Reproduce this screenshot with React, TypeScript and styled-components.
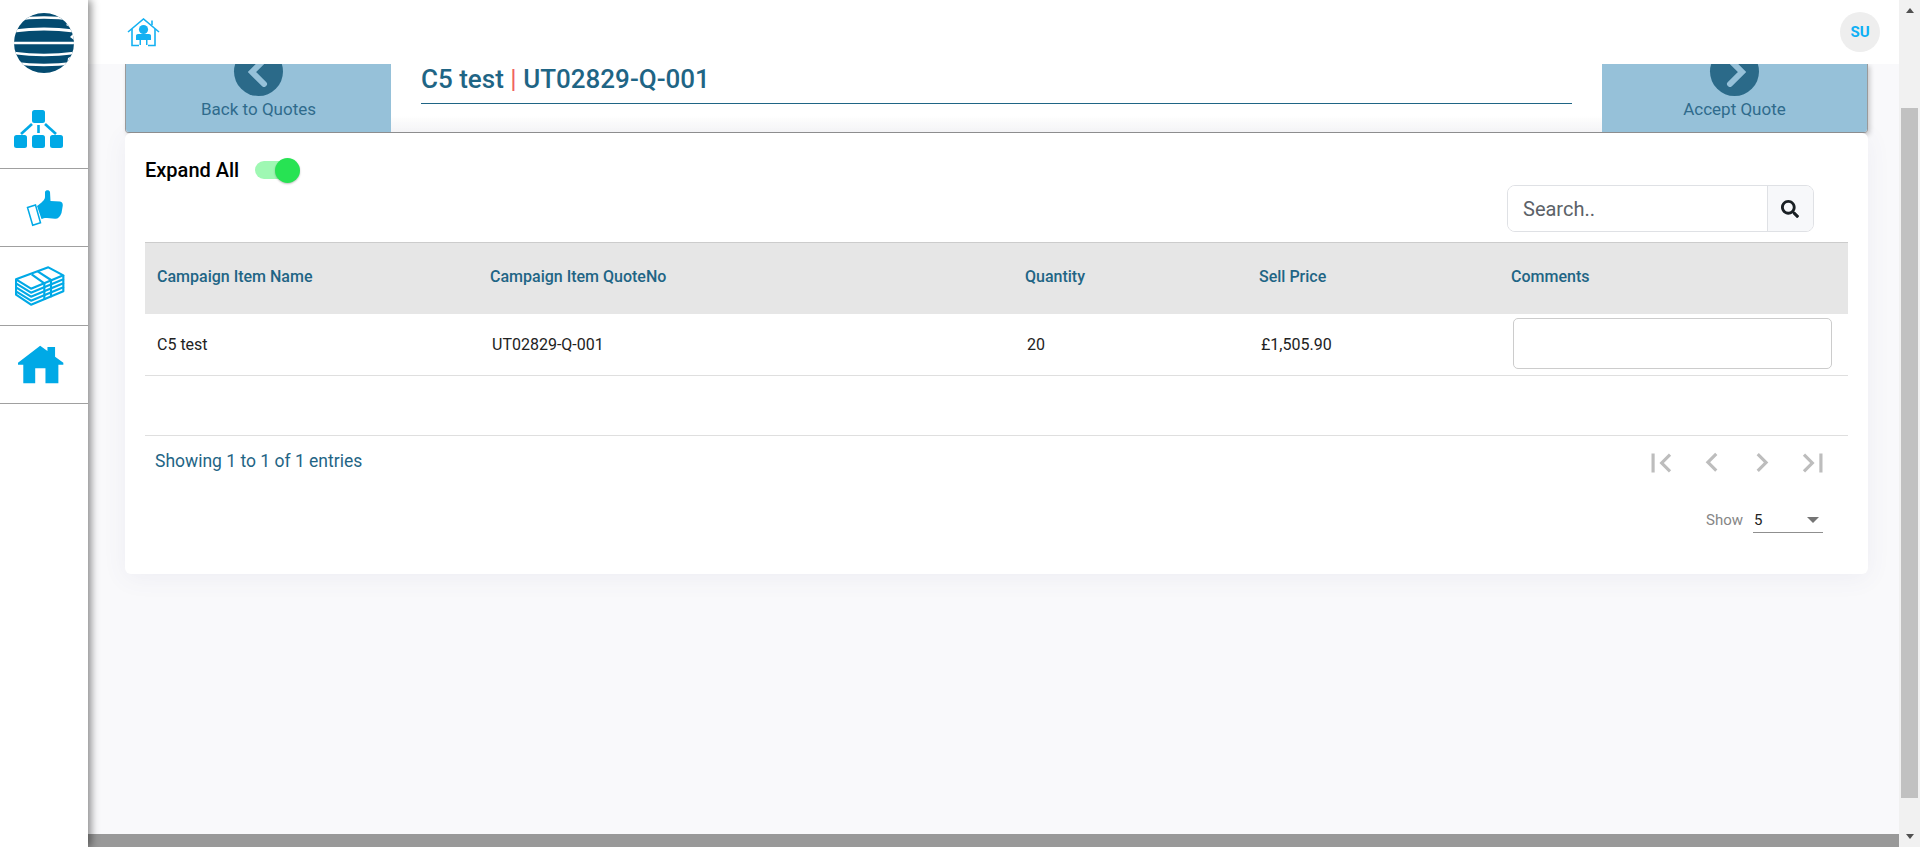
import React from 'react';
import styled, { createGlobalStyle } from 'styled-components';
import { FaSearch } from 'react-icons/fa';

const GlobalStyle = createGlobalStyle`
  html, body {
    margin: 0;
    height: 100%;
    overflow: hidden;
    font-family: Roboto, 'Liberation Sans', sans-serif;
    background: #f9f9fb;
  }
`;

const Page = styled.div`
  display: flex;
  width: 1920px;
  height: 847px;
  overflow: hidden;
`;

const Sidebar = styled.nav`
  width: 88px;
  flex-shrink: 0;
  background: #fff;
  box-shadow: 3px 0 8px rgba(0, 0, 0, 0.45);
  z-index: 3;
  display: flex;
  flex-direction: column;
`;

const SideItem = styled.div<{ $height: number; $plain?: boolean; $left?: number; $down?: number }>`
  height: ${(p) => p.$height}px;
  box-sizing: border-box;
  display: flex;
  justify-content: center;
  align-items: center;
  padding-right: ${(p) => (p.$left || 0) * 2}px;
  padding-top: ${(p) => (p.$down || 0) * 2}px;
  border-bottom: ${(p) => (p.$plain ? 'none' : '1px solid #a0a0a0')};
`;

const Main = styled.div`
  flex: 1;
  min-width: 0;
  display: flex;
  flex-direction: column;
`;

const Header = styled.header`
  height: 64px;
  flex-shrink: 0;
  background: #fff;
  display: flex;
  align-items: center;
  justify-content: space-between;
  padding: 0 19px 0 39px;
  box-sizing: border-box;
  z-index: 2;
`;

const Avatar = styled.div`
  width: 40px;
  height: 40px;
  border-radius: 50%;
  background: #eeeeee;
  color: #0fb0f5;
  font-size: 15px;
  font-weight: 700;
  display: flex;
  align-items: center;
  justify-content: center;
`;

const Content = styled.main`
  flex: 1;
  min-height: 0;
  overflow: hidden;
  padding: 0 31px 0 37px;
  background: #f9f9fb;
`;

const Panel = styled.section`
  display: flex;
  height: 69px;
  box-sizing: border-box;
  overflow: hidden;
  border-bottom: 1px solid #8f8f8f;
  border-left: 1px solid #9a9a9a;
  border-right: 1px solid #9a9a9a;
  border-radius: 0 0 4px 4px;
  background: linear-gradient(#fff 75%, #f7f7f8);
  box-shadow: 2px 2px 5px rgba(0, 0, 0, 0.2);
`;

const PanelAction = styled.div`
  width: 265px;
  flex-shrink: 0;
  background: #96c1d9;
  display: flex;
  flex-direction: column;
  align-items: center;
  justify-content: flex-end;
  padding-bottom: 13px;
  box-sizing: border-box;
  color: #2f6b8c;
  font-size: 17px;
  line-height: 19px;
`;

const ActionCircle = styled.div`
  width: 49px;
  height: 49px;
  flex-shrink: 0;
  border-radius: 50%;
  background: #2b6a89;
  margin-bottom: 4px;
  display: flex;
  align-items: center;
  justify-content: center;
`;

const TitleBlock = styled.div`
  flex: 1;
  padding: 0 30px;
`;

const Title = styled.h1`
  margin: 0;
  height: 39px;
  line-height: 31px;
  font-size: 26px;
  font-weight: 500;
  color: #1f6585;
  border-bottom: 1px solid #1f6585;
`;

const TitleSep = styled.span`
  color: #f0625f;
  font-weight: 400;
`;

const Card = styled.section`
  height: 441px;
  box-sizing: border-box;
  padding: 27px 20px 0;
  background: #fff;
  border-radius: 6px;
  box-shadow: 0 4px 24px rgba(80, 80, 140, 0.07);
`;

const ExpandRow = styled.div`
  display: flex;
  align-items: center;
  gap: 16px;
  height: 20px;
`;

const ExpandLabel = styled.span`
  font-size: 20px;
  font-weight: 500;
  color: #000;
`;

const Toggle = styled.div`
  position: relative;
  width: 38px;
  height: 18px;
  border-radius: 9px;
  background: #9ff8b3;
`;

const ToggleKnob = styled.span`
  position: absolute;
  top: -3px;
  right: -7px;
  width: 25px;
  height: 25px;
  border-radius: 50%;
  background: #27e353;
  box-shadow: 0 1px 2px rgba(0, 0, 0, 0.25);
`;

const SearchRow = styled.div`
  display: flex;
  justify-content: flex-end;
  margin-top: 5px;
  padding-right: 34px;
`;

const SearchGroup = styled.div`
  display: flex;
  width: 307px;
  height: 47px;
  box-sizing: border-box;
  border: 1px solid #dfe1e5;
  border-radius: 8px;
  overflow: hidden;
`;

const SearchInput = styled.input`
  flex: 1;
  min-width: 0;
  border: none;
  outline: none;
  padding: 0 15px;
  font-family: inherit;
  font-size: 20px;
  &::placeholder {
    color: #5c6268;
    opacity: 1;
  }
`;

const SearchButton = styled.div`
  width: 46px;
  padding-right: 2px;
  box-sizing: border-box;
  background: #f7f8fa;
  border-left: 1px solid #dfe1e5;
  display: flex;
  align-items: center;
  justify-content: center;
  color: #1a2024;
`;

const Table = styled.table`
  width: 1703px;
  margin-top: 10px;
  border-collapse: collapse;
  table-layout: fixed;
`;

const HeadCell = styled.th<{ $width: number }>`
  width: ${(p) => p.$width}px;
  height: 71px;
  box-sizing: border-box;
  padding: 0 0 3px 12px;
  background: #e6e6e6;
  border-top: 1px solid #cccccc;
  text-align: left;
  font-size: 16px;
  font-weight: 500;
  color: #1f6585;
`;

const BodyCell = styled.td<{ $first?: boolean }>`
  height: 62px;
  box-sizing: border-box;
  padding: 0 16px 0 ${(p) => (p.$first ? 12 : 14)}px;
  border-bottom: 1px solid #dfdfdf;
  font-size: 16px;
  color: #222;
`;

const CommentBox = styled.input`
  display: block;
  width: 100%;
  height: 51px;
  margin-bottom: 2px;
  box-sizing: border-box;
  border: 1px solid #cccccc;
  border-radius: 5px;
  background: #fff;
  outline: none;
`;

const EmptyRow = styled.div`
  height: 60px;
  box-sizing: border-box;
  border-bottom: 1px solid #dfdfdf;
`;

const PagerRow = styled.div`
  display: flex;
  justify-content: space-between;
  align-items: center;
  height: 50px;
  padding-left: 10px;
`;

const Showing = styled.span`
  font-size: 17.5px;
  color: #1f6585;
`;

const Pager = styled.div`
  display: flex;
  padding: 4px 10px 0 0;
`;

const PagerButton = styled.div`
  width: 50.5px;
  display: flex;
  justify-content: center;
  color: #bdbdbd;
`;

const ShowRow = styled.div`
  display: flex;
  justify-content: flex-end;
  align-items: center;
  gap: 10px;
  margin-top: 21px;
  padding-right: 25px;
  font-size: 15px;
  color: #868686;
`;

const ShowSelect = styled.div`
  width: 70px;
  height: 26px;
  box-sizing: border-box;
  border-bottom: 1px solid #8f8f8f;
  display: flex;
  align-items: center;
  justify-content: space-between;
  padding: 0 4px 0 1px;
  color: #222;
`;

const SelectArrow = styled.span`
  width: 0;
  height: 0;
  border-left: 6.5px solid transparent;
  border-right: 6.5px solid transparent;
  border-top: 6.5px solid #757575;
`;

const BottomBar = styled.div`
  height: 13px;
  flex-shrink: 0;
  background: #999999;
`;

const Scrollbar = styled.div`
  width: 21px;
  flex-shrink: 0;
  background: #f1f1f1;
  display: flex;
  flex-direction: column;
  z-index: 2;
`;

const ScrollArrow = styled.div`
  height: 21px;
  flex-shrink: 0;
  display: flex;
  align-items: center;
  justify-content: center;
`;

const ArrowUp = styled.span`
  border-left: 4.5px solid transparent;
  border-right: 4.5px solid transparent;
  border-bottom: 5px solid #505050;
`;

const ArrowDown = styled.span`
  border-left: 4.5px solid transparent;
  border-right: 4.5px solid transparent;
  border-top: 5px solid #505050;
`;

const ScrollThumb = styled.div`
  flex: 1;
  margin: 87px 2px 28px;
  background: #c1c1c1;
`;

const BLUE = '#00a9e6';

const GlobeLogo = () => (
  <svg width="60" height="60" viewBox="0 0 60 60">
    <defs>
      <clipPath id="globe-clip">
        <circle cx="30" cy="30" r="30" />
      </clipPath>
    </defs>
    <g clipPath="url(#globe-clip)">
      <rect width="60" height="60" fill="#044b70" />
      <g fill="none" stroke="#fff">
        <path d="M0 7 Q30 2 60 7" strokeWidth="2.6" />
        <path d="M0 18 Q30 14 60 18" strokeWidth="3" />
        <path d="M0 30 H60" strokeWidth="2.4" />
        <path d="M0 40 Q30 44 60 40" strokeWidth="2.4" />
        <path d="M0 50 Q30 54 60 50" strokeWidth="2.4" />
      </g>
      <path d="M60 0 V16 L52 12 L55 9 L50 7 L47 0 Z M60 20 L56 24 L60 27 Z M60 42 L54 45 L52 60 H60 Z" fill="#fff" />
    </g>
  </svg>
);

const OrgIcon = () => (
  <svg width="49" height="38" viewBox="0 0 49 38" fill={BLUE}>
    <rect x="18" y="0" width="13" height="13" rx="2.5" />
    <rect x="0" y="25" width="13" height="13" rx="2.5" />
    <rect x="18" y="25" width="13" height="13" rx="2.5" />
    <rect x="36" y="25" width="13" height="13" rx="2.5" />
    <path d="M18 14 L7 24" stroke={BLUE} strokeWidth="2.6" fill="none" />
    <path d="M31 14 L42 24" stroke={BLUE} strokeWidth="2.6" fill="none" />
    <path d="M24.5 15 V23" stroke={BLUE} strokeWidth="2.6" fill="none" />
  </svg>
);

const ThumbIcon = () => (
  <svg width="37" height="37" viewBox="26 189 37 37">
    <path d="M27.5 206.5 L35.5 204 L40.5 221.8 L32.7 224.3 Z" fill="none" stroke={BLUE} strokeWidth="1.5" />
    <path
      d="M37 205 C41 202 45 199 45 196 L45 191 C45.5 188.5 49.5 188.5 50 191 L50.5 200 L60 200.5 C62.5 201 63 203 62.7 205 L61.5 212 C60 216 58 218 55 217.8 L47 217 C45 216.8 43 217.5 41.5 218 Z"
      fill={BLUE}
    />
  </svg>
);

const MoneyIcon = () => (
  <svg width="50" height="40" viewBox="42 290 150 120" fill="none" stroke={BLUE} strokeWidth="6.5" strokeLinejoin="round">
    <path d="M45 330 L142 294 L187 318 L90 358 Z" />
    <path d="M45 330 V342 L90 370 L187 330 V318" />
    <path d="M45 342 V354 L90 382 L187 342 V330" />
    <path d="M45 354 V366 L90 394 L187 354 V342" />
    <path d="M45 366 L45 376 L90 406 L187 366 V354" />
    <path d="M92 315 L130 342 V392" />
    <path d="M110 306 L150 332 V384" />
  </svg>
);

const HomeIcon = () => (
  <svg width="47" height="39" viewBox="50 525 142 117" fill={BLUE}>
    <path
      fillRule="evenodd"
      d="M120 527 L142 543 V531 H165 V560 L190 578 V584 H175 V640 H136 V595 H105 V640 H69 V584 H53 V578 Z"
    />
  </svg>
);

const HouseUserIcon = () => (
  <svg width="33" height="29" viewBox="0 0 33 29">
    <path d="M1 14 L16.5 1 L32 14" fill="none" stroke="#14b1f2" strokeWidth="1.6" />
    <path d="M5 11 V27.5 H12 M28 11 V27.5 H21" fill="none" stroke="#14b1f2" strokeWidth="1.6" />
    <path d="M25 2.5 V7" fill="none" stroke="#14b1f2" strokeWidth="1.6" />
    <circle cx="16.5" cy="11.5" r="4.6" fill="#14b1f2" />
    <path d="M9 17.5 Q9 16 11 16 H22 Q24 16 24 17.5 V22 H20.5 V27 H19 V22 H14 V27 H12.5 V22 H9 Z" fill="#14b1f2" />
  </svg>
);

const ActionChevron = ({ dir }: { dir: 'left' | 'right' }) => (
  <svg width="30" height="30" viewBox="0 0 30 30">
    <path
      d={dir === 'left' ? 'M20 3 L8 15 L20 27' : 'M10 3 L22 15 L10 27'}
      fill="none"
      stroke="#96c1d9"
      strokeWidth="6"
      strokeLinecap="round"
      strokeLinejoin="miter"
    />
  </svg>
);

const PAGER_ICONS = [
  'M18.41 16.59L13.82 12l4.59-4.59L17 6l-6 6 6 6zM6 6h2v12H6z',
  'M15.41 16.09l-4.58-4.59 4.58-4.59L14 5.5l-6 6 6 6z',
  'M8.59 16.34l4.58-4.59-4.58-4.59L10 5.75l6 6-6 6z',
  'M5.59 7.41L10.18 12l-4.59 4.59L7 18l6-6-6-6zM16 6h2v12h-2z',
];

const COLUMNS = [
  { name: 'Campaign Item Name', width: 333 },
  { name: 'Campaign Item QuoteNo', width: 535 },
  { name: 'Quantity', width: 234 },
  { name: 'Sell Price', width: 252 },
  { name: 'Comments', width: 349 },
];

const App = () => (
  <Page>
    <GlobalStyle />
    <Sidebar>
      <SideItem $height={84} $plain $down={1}>
        <GlobeLogo />
      </SideItem>
      <SideItem $height={85} $left={6} $down={3}>
        <OrgIcon />
      </SideItem>
      <SideItem $height={78} $down={1}>
        <ThumbIcon />
      </SideItem>
      <SideItem $height={79} $left={4}>
        <MoneyIcon />
      </SideItem>
      <SideItem $height={78} $left={4}>
        <HomeIcon />
      </SideItem>
    </Sidebar>
    <Main>
      <Header>
        <HouseUserIcon />
        <Avatar>SU</Avatar>
      </Header>
      <Content>
        <Panel>
          <PanelAction>
            <ActionCircle>
              <ActionChevron dir="left" />
            </ActionCircle>
            Back to Quotes
          </PanelAction>
          <TitleBlock>
            <Title>
              C5 test <TitleSep>|</TitleSep> UT02829-Q-001
            </Title>
          </TitleBlock>
          <PanelAction>
            <ActionCircle>
              <ActionChevron dir="right" />
            </ActionCircle>
            Accept Quote
          </PanelAction>
        </Panel>
        <Card>
          <ExpandRow>
            <ExpandLabel>Expand All</ExpandLabel>
            <Toggle>
              <ToggleKnob />
            </Toggle>
          </ExpandRow>
          <SearchRow>
            <SearchGroup>
              <SearchInput placeholder="Search.." />
              <SearchButton>
                <FaSearch size={18} />
              </SearchButton>
            </SearchGroup>
          </SearchRow>
          <Table>
            <thead>
              <tr>
                {COLUMNS.map((c) => (
                  <HeadCell key={c.name} $width={c.width}>
                    {c.name}
                  </HeadCell>
                ))}
              </tr>
            </thead>
            <tbody>
              <tr>
                <BodyCell $first>C5 test</BodyCell>
                <BodyCell>UT02829-Q-001</BodyCell>
                <BodyCell>20</BodyCell>
                <BodyCell>£1,505.90</BodyCell>
                <BodyCell>
                  <CommentBox />
                </BodyCell>
              </tr>
            </tbody>
          </Table>
          <EmptyRow />
          <PagerRow>
            <Showing>Showing 1 to 1 of 1 entries</Showing>
            <Pager>
              {PAGER_ICONS.map((d) => (
                <PagerButton key={d}>
                  <svg width="38" height="38" viewBox="0 0 24 24" fill="currentColor">
                    <path d={d} />
                  </svg>
                </PagerButton>
              ))}
            </Pager>
          </PagerRow>
          <ShowRow>
            Show
            <ShowSelect>
              5
              <SelectArrow />
            </ShowSelect>
          </ShowRow>
        </Card>
      </Content>
      <BottomBar />
    </Main>
    <Scrollbar>
      <ScrollArrow>
        <ArrowUp />
      </ScrollArrow>
      <ScrollThumb />
      <ScrollArrow>
        <ArrowDown />
      </ScrollArrow>
    </Scrollbar>
  </Page>
);

export default App;
